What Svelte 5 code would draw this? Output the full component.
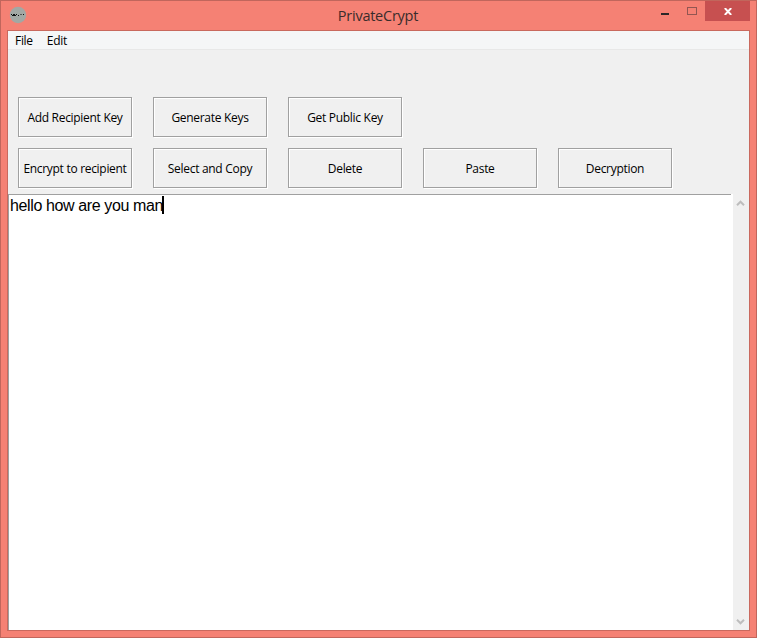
<script>
  const rows = [
    ['Add Recipient Key', 'Generate Keys', 'Get Public Key'],
    ['Encrypt to recipient', 'Select and Copy', 'Delete', 'Paste', 'Decryption']
  ];
  let message = $state('hello how are you man');
</script>

<div class="window">
  <header class="titlebar">
    <svg class="logo" width="18" height="18" viewBox="0 0 18 18">
      <circle cx="9" cy="9" r="8.2" fill="#a2a8a4" />
      <path d="M2 8.5h1M4 8.5h2M7 8.5h1M11.5 8.5h1M14 8.5h1M3 9.5h4M9 9.5h1" stroke="#111" stroke-width="1" />
    </svg>
    <h1>PrivateCrypt</h1>
    <div class="controls">
      <svg width="85" height="20" viewBox="0 0 85 20" shape-rendering="crispEdges">
        <rect x="0" y="12" width="8" height="2" fill="#2b2627" />
        <rect x="26.5" y="6.5" width="9" height="7" fill="none" stroke="#925652" />
      </svg>
      <button class="close" aria-label="Close">
        <svg width="8" height="7" viewBox="0 0 8 7">
          <path d="M.8 0L7.2 7M7.2 0L.8 7" stroke="#fff" stroke-width="1.9" />
        </svg>
      </button>
    </div>
  </header>
  <main class="client">
    <nav class="menu"><span>File</span><span>Edit</span></nav>
    <div class="toolbar">
      {#each rows as row}
        <div class="row">
          {#each row as label}
            <button class="action"><span>{label}</span></button>
          {/each}
        </div>
      {/each}
    </div>
    <div class="editor">
      <div class="text">{message}<i class="caret"></i></div>
      <div class="scrollbar">
        <svg width="9" height="6" viewBox="0 0 9 6"><path d="M1 5.2L4.5 1.7L8 5.2" fill="none" stroke="#bdbdbd" stroke-width="2" /></svg>
        <svg width="9" height="6" viewBox="0 0 9 6"><path d="M1 .8L4.5 4.3L8 .8" fill="none" stroke="#bdbdbd" stroke-width="2" /></svg>
      </div>
    </div>
  </main>
</div>

<style>
  :global(body) { margin: 0; overflow: hidden; }
  .window {
    box-sizing: border-box;
    width: 757px;
    height: 638px;
    display: flex;
    flex-direction: column;
    padding: 0 6px 6px;
    border: 1px solid #c1665c;
    background: #f58174;
    font-family: "Open Sans", "Noto Sans", sans-serif;
    color: #000;
  }
  .titlebar {
    height: 29px;
    flex: none;
    display: grid;
    grid-template-columns: 140px 1fr 140px;
    align-items: start;
  }
  .logo { margin: 5px 0 0 2px; }
  h1 {
    margin: 0;
    font-size: 14.5px;
    line-height: 29px;
    font-weight: 400;
    text-align: center;
    letter-spacing: -0.25px;
    color: #3a2c2b;
    padding-right: 1px;
  }
  .controls { display: flex; justify-content: flex-end; }
  .controls > svg { flex: none; margin-right: -41px; }
  .close {
    width: 45px;
    height: 20px;
    flex: none;
    padding: 1px 0 0;
    border: 0;
    background: #c75050;
    display: flex;
    align-items: center;
    justify-content: center;
  }
  .client {
    flex: 1;
    min-height: 0;
    display: flex;
    flex-direction: column;
    border: 1px solid #c9695e;
    background: #f0f0f0;
  }
  .menu {
    box-sizing: border-box;
    height: 19px;
    flex: none;
    display: flex;
    gap: 14px;
    padding-left: 7px;
    background: #f5f6f7;
    border-bottom: 1px solid #e8e8e8;
    font-size: 12px;
    line-height: 19px;
    letter-spacing: -0.3px;
  }
  .toolbar {
    box-sizing: border-box;
    height: 144px;
    flex: none;
    display: flex;
    flex-direction: column;
    gap: 11px;
    padding: 47px 0 0 10px;
  }
  .row { display: flex; gap: 21px; }
  .action {
    box-sizing: border-box;
    width: 114px;
    height: 40px;
    padding: 2px 0 0;
    border: 1px solid #a0a0a0;
    background: #f0f0f0;
    box-shadow: 1px 1px 0 #fff, inset 1px 1px 0 #fff;
    display: flex;
    align-items: center;
    justify-content: center;
    font: 12px/16px "Open Sans", "Noto Sans", sans-serif;
    letter-spacing: -0.3px;
    white-space: nowrap;
    color: #000;
  }
  .editor { flex: 1; display: flex; background: #fff; }
  .text {
    flex: 1;
    margin-right: 2px;
    padding: 1px 0 0 1px;
    border-top: 1px solid #a0a0a0;
    border-left: 1px solid #a0a0a0;
    font: 16px/19px "Liberation Sans", Arial, sans-serif;
    letter-spacing: -0.38px;
  }
  .caret {
    display: inline-block;
    width: 2px;
    height: 18px;
    margin-left: -1px;
    background: #000;
    vertical-align: top;
  }
  .scrollbar {
    width: 16px;
    display: flex;
    flex-direction: column;
    justify-content: space-between;
    align-items: center;
    box-sizing: border-box;
    padding: 6px 1px 5px 0;
    background: #f0f0f0;
  }
</style>
